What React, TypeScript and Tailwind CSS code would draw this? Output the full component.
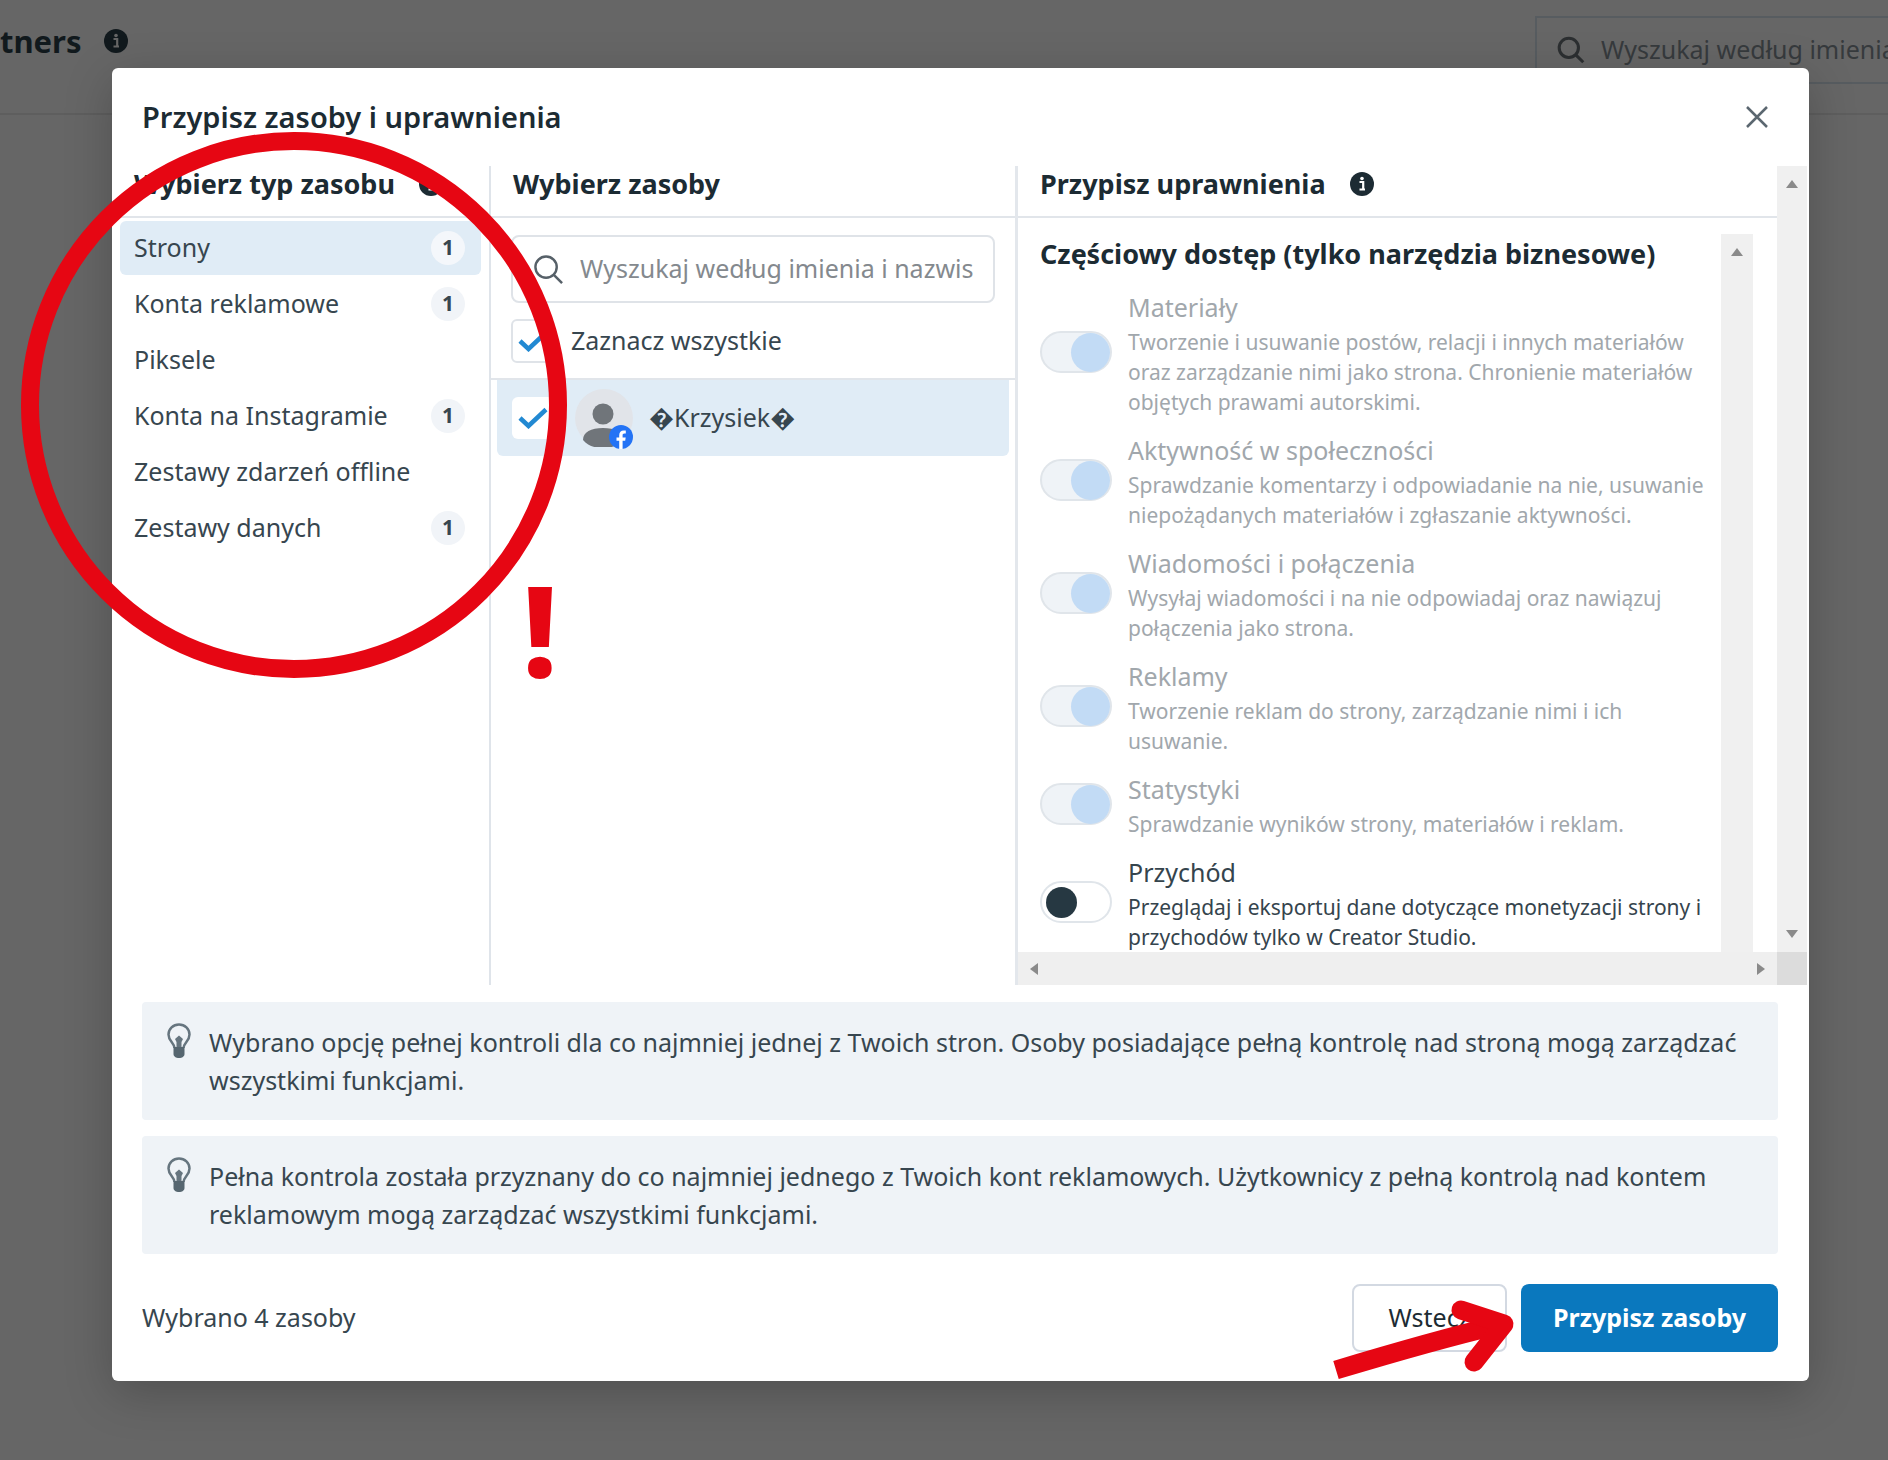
import { useState } from "react";

const RESOURCE_TYPES = [
  { name: "Strony", count: 1 },
  { name: "Konta reklamowe", count: 1 },
  { name: "Piksele" },
  { name: "Konta na Instagramie", count: 1 },
  { name: "Zestawy zdarzeń offline" },
  { name: "Zestawy danych", count: 1 },
];

const PERMISSIONS = [
  {
    id: "content",
    name: "Materiały",
    text: "Tworzenie i usuwanie postów, relacji i innych materiałów oraz zarządzanie nimi jako strona. Chronienie materiałów objętych prawami autorskimi.",
    locked: true,
  },
  {
    id: "community",
    name: "Aktywność w społeczności",
    text: "Sprawdzanie komentarzy i odpowiadanie na nie, usuwanie niepożądanych materiałów i zgłaszanie aktywności.",
    locked: true,
  },
  {
    id: "messages",
    name: "Wiadomości i połączenia",
    text: "Wysyłaj wiadomości i na nie odpowiadaj oraz nawiązuj połączenia jako strona.",
    locked: true,
  },
  {
    id: "ads",
    name: "Reklamy",
    text: "Tworzenie reklam do strony, zarządzanie nimi i ich usuwanie.",
    locked: true,
  },
  {
    id: "insights",
    name: "Statystyki",
    text: "Sprawdzanie wyników strony, materiałów i reklam.",
    locked: true,
  },
  {
    id: "revenue",
    name: "Przychód",
    text: "Przeglądaj i eksportuj dane dotyczące monetyzacji strony i przychodów tylko w Creator Studio.",
    locked: false,
  },
];

const NOTICES = [
  "Wybrano opcję pełnej kontroli dla co najmniej jednej z Twoich stron. Osoby posiadające pełną kontrolę nad stroną mogą zarządzać wszystkimi funkcjami.",
  "Pełna kontrola została przyznany do co najmniej jednego z Twoich kont reklamowych. Użytkownicy z pełną kontrolą nad kontem reklamowym mogą zarządzać wszystkimi funkcjami.",
];

function InfoIcon({ hole = "white" }: { hole?: string }) {
  return (
    <svg viewBox="0 0 24 24" className="size-6 shrink-0" aria-hidden="true">
      <circle cx="12" cy="12" r="12" fill="currentColor" />
      <circle cx="12" cy="6.5" r="1.8" fill={hole} />
      <path d="M9.5 10h3.7v7M9.5 17.5h5.5" stroke={hole} strokeWidth="2.2" fill="none" />
    </svg>
  );
}

function SearchIcon({ className }: { className: string }) {
  return (
    <svg viewBox="0 0 32 32" className={className} fill="none" stroke="currentColor" aria-hidden="true">
      <circle cx="13.5" cy="13.5" r="11" />
      <path d="M21.5 21.5 30 30" />
    </svg>
  );
}

function BulbIcon() {
  return (
    <svg viewBox="0 0 24 36" className="h-9 w-6 shrink-0" aria-hidden="true">
      <path
        d="M7.500 25C7 19.500 1.500 18 1.500 11.500a10.500 10 0 0 1 21 0C22.500 18 17 19.500 16.500 25"
        fill="none"
        stroke="#66757f"
        strokeWidth="2.500"
      />
      <path d="M12 12.500l4 3.500-1.500 3v5h-5v-5L8 16z" fill="#66757f" />
      <path d="M6.500 24h11v7c0 2.500-2.500 4-5.500 4s-5.500-1.500-5.500-4z" fill="#566670" />
    </svg>
  );
}

function CheckBox({ id, bordered }: { id: string; bordered?: boolean }) {
  return (
    <span className="grid size-11 shrink-0 place-items-center">
      <input
        id={id}
        type="checkbox"
        defaultChecked
        className={
          "peer col-start-1 row-start-1 appearance-none rounded-md bg-white " +
          (bordered ? "size-11 border-2 border-[#dfe3e8]" : "size-[42px]")
        }
      />
      <svg
        viewBox="0 0 30 22"
        className="pointer-events-none invisible col-start-1 row-start-1 h-[22px] w-[30px] peer-checked:visible"
        aria-hidden="true"
      >
        <path d="M2 11l8.500 8L28 2.500" fill="none" stroke="#2289d2" strokeWidth="4.500" />
      </svg>
    </span>
  );
}

function Arrow({ className }: { className: string }) {
  return (
    <svg viewBox="0 0 12 8" className={"h-2 w-3 fill-[#8a8a8a] " + className} aria-hidden="true">
      <path d="M6 0l6 8H0z" />
    </svg>
  );
}

function ColumnHeader({ title, info }: { title: string; info?: boolean }) {
  return (
    <h2 className="flex items-center gap-6 border-b-2 border-[#e1e5ea] pb-3.5 pl-[22px] text-[27px] leading-9 font-bold text-[#1c2b33]">
      {title}
      {info && <InfoIcon />}
    </h2>
  );
}

function ResourceTypes() {
  const [selected, setSelected] = useState("Strony");
  return (
    <section className="border-r-2 border-[#dfe4ea]">
      <ColumnHeader title="Wybierz typ zasobu" info />
      <ul className="flex flex-col gap-0.5 px-2 pt-[3px]">
        {RESOURCE_TYPES.map((type) => (
          <li key={type.name}>
            <button
              type="button"
              onClick={() => setSelected(type.name)}
              className={
                "flex h-[54px] w-full items-center justify-between rounded-md pr-4 pl-3.5 text-left " +
                (selected === type.name ? "bg-[#e0ecf6]" : "bg-white")
              }
            >
              {type.name}
              {type.count && (
                <span
                  className={
                    "grid size-[34px] place-items-center rounded-full text-[21px] font-bold " +
                    (selected === type.name ? "bg-[#f4f7fb]" : "bg-[#f1f4f8]")
                  }
                >
                  {type.count}
                </span>
              )}
            </button>
          </li>
        ))}
      </ul>
    </section>
  );
}

function Resources() {
  return (
    <section className="border-r-[3px] border-[#e3e7ec]">
      <ColumnHeader title="Wybierz zasoby" />
      <div className="mt-[17px] px-5">
        <label className="flex h-[68px] items-center gap-4 rounded-lg border-2 border-[#dfe3e8] px-5">
          <SearchIcon className="size-[31px] shrink-0 stroke-[2.5] text-[#566068]" />
          <input
            type="text"
            aria-label="Wyszukaj zasoby"
            placeholder="Wyszukaj według imienia i nazwis"
            className="w-full min-w-0 outline-none placeholder:text-[#84898e]"
          />
        </label>
      </div>
      <div className="flex h-[77px] items-center gap-4 border-b-2 border-[#e1e5ea] pl-5">
        <CheckBox id="all" bordered />
        <label htmlFor="all">Zaznacz wszystkie</label>
      </div>
      <div className="mx-1.5 flex h-[76px] items-center rounded-b-md bg-[#e0ecf6] pl-3.5">
        <CheckBox id="resource" />
        <span className="relative ml-5 size-[58px] shrink-0">
          <svg viewBox="0 0 58 58" className="size-full" aria-hidden="true">
            <circle cx="29" cy="29" r="29" fill="#e1e4e9" />
            <circle cx="28" cy="25" r="10.500" fill="#70757a" />
            <path d="M8 51c0-8 8-12 20-12s20 4 20 12c-5 6-12 8-20 8s-15-2-20-8z" fill="#70757a" />
          </svg>
          <svg viewBox="0 0 24 24" className="absolute right-0 -bottom-0.5 size-6" aria-hidden="true">
            <circle cx="12" cy="12" r="12" fill="#2373f5" />
            <path
              d="M10.200 24v-8.300H7.500v-3.300h2.700v-2.200c0-3.100 1.700-4.700 4.500-4.700 1.100 0 2.100.1 2.100.1v3h-1.400c-1.400 0-1.800.8-1.800 1.700v2.100h3.100l-.5 3.300h-2.600V24z"
              fill="white"
            />
          </svg>
        </span>
        <label htmlFor="resource" className="ml-4">
          {"\uFFFDKrzysiek\uFFFD"}
        </label>
      </div>
    </section>
  );
}

function Permissions() {
  return (
    <section className="grid min-w-0 grid-cols-[minmax(0,1fr)_30px] grid-rows-[1fr_33px] pr-0.5">
      <div>
        <ColumnHeader title="Przypisz uprawnienia" info />
        <div className="mt-4 flex pr-6 pl-[22px]">
          <div className="grow">
            <h3 className="text-[27px] leading-10 font-bold text-[#1c2b33]">
              Częściowy dostęp (tylko narzędzia biznesowe)
            </h3>
            <ul className="mt-[13px] flex flex-col gap-[13px]">
              {PERMISSIONS.map((p) => (
                <li
                  key={p.id}
                  className={"flex items-center gap-4 " + (p.locked ? "text-[#a1a7ac]" : "text-[#35444d]")}
                >
                  <input
                    id={p.id}
                    type="checkbox"
                    role="switch"
                    defaultChecked={p.locked}
                    disabled={p.locked}
                    className="flex h-[42px] w-[72px] shrink-0 appearance-none items-center rounded-full border-2 border-[#e0e5ea] bg-white px-1 before:size-[31px] before:rounded-full before:bg-[#263842] checked:justify-end checked:bg-[#eff3f7] checked:px-0 checked:before:size-[39px] checked:before:bg-[#c2dbf5]"
                  />
                  <div>
                    <label htmlFor={p.id} className="block leading-10">
                      {p.name}
                    </label>
                    <p className="text-[21px] leading-[30px]">{p.text}</p>
                  </div>
                </li>
              ))}
            </ul>
          </div>
          <div className="w-8 shrink-0 bg-[#f0f0f0] pt-3.5">
            <Arrow className="mx-auto" />
          </div>
        </div>
      </div>
      <div className="flex flex-col items-center justify-between bg-[#f0f0f0] py-3.5">
        <Arrow className="" />
        <Arrow className="rotate-180" />
      </div>
      <div className="flex items-center justify-between bg-[#efefef] px-2.5">
        <Arrow className="-rotate-90" />
        <Arrow className="rotate-90" />
      </div>
      <div className="bg-[#dcdcdc]" />
    </section>
  );
}

function Dialog() {
  return (
    <div
      role="dialog"
      aria-labelledby="dialog-title"
      className="absolute top-[68px] right-[79px] left-28 rounded-md bg-white text-[#37464f] shadow-[0_12px_48px_rgba(0,0,0,0.22)]"
    >
      <header className="flex h-[98px] items-center justify-between pr-10 pl-[30px]">
        <h1 id="dialog-title" className="text-[29px] font-semibold text-[#1c2b33]">
          Przypisz zasoby i uprawnienia
        </h1>
        <button type="button" aria-label="Zamknij" className="text-[#5b6770]">
          <svg viewBox="0 0 24 24" className="size-6" fill="none" stroke="currentColor" aria-hidden="true">
            <path d="M2 2l20 20M22 2 2 22" strokeWidth="2.500" />
          </svg>
        </button>
      </header>
      <div className="grid grid-cols-[379px_527px_minmax(0,1fr)]">
        <ResourceTypes />
        <Resources />
        <Permissions />
      </div>
      <div className="mt-[17px] flex flex-col gap-4 pr-[31px] pl-[30px]">
        {NOTICES.map((notice) => (
          <div key={notice} className="flex gap-[18px] rounded bg-[#eff3f7] px-[25px] py-[21px]">
            <BulbIcon />
            <p className="leading-[38px]">{notice}</p>
          </div>
        ))}
      </div>
      <footer className="flex items-center gap-3.5 pt-[30px] pr-[31px] pb-[29px] pl-[30px]">
        <p className="grow">Wybrano 4 zasoby</p>
        <button type="button" className="h-[68px] w-[155px] rounded-lg border-2 border-[#d3d9e2] text-[#1c2b33]">
          Wstecz
        </button>
        <button type="button" className="h-[68px] rounded-lg bg-[#0a78be] px-8 font-bold text-white">
          Przypisz zasoby
        </button>
      </footer>
    </div>
  );
}

function Annotations() {
  return (
    <div className="pointer-events-none absolute inset-0 overflow-hidden text-[#e60613]">
      <svg viewBox="0 0 548 546" className="absolute top-[132px] left-[20px] h-[546px] w-[548px]" aria-hidden="true">
        <circle cx="274" cy="273" r="264" fill="none" stroke="currentColor" strokeWidth="18" />
      </svg>
      <span className="absolute top-[565px] left-[522px] text-[126px] leading-none font-extrabold">!</span>
      <svg
        viewBox="0 0 190 90"
        className="absolute top-[1290px] left-[1330px] h-[90px] w-[190px]"
        fill="none"
        stroke="currentColor"
        strokeWidth="19"
        aria-hidden="true"
      >
        <path d="M6 80C56 65 114 48 165 36" />
        <path d="M131 20 174 34 144 72" strokeLinecap="round" strokeLinejoin="round" />
      </svg>
    </div>
  );
}

export default function App() {
  return (
    <div className="relative min-h-screen overflow-hidden bg-[#666666] font-['Noto_Sans',sans-serif] text-[25px] text-[#1c2b33]">
      <div className="flex h-[115px] items-start justify-between border-b-2 border-[#5e5e5e]">
        <div className="flex items-center gap-[22px] pt-5 text-[#11191d]">
          <span className="text-[31px] leading-[42px] font-bold">tners</span>
          <InfoIcon hole="#666666" />
        </div>
        <label className="mt-4 flex h-[68px] w-[353px] items-center gap-4 border-2 border-r-0 border-[#575c60] pl-5 text-[#2c2f31]">
          <SearchIcon className="size-7 shrink-0 stroke-[3.5]" />
          <input
            type="text"
            aria-label="Szukaj"
            placeholder="Wyszukaj według imienia i nazwiska"
            className="w-full min-w-0 outline-none placeholder:text-[#363a3d]"
          />
        </label>
      </div>
      <Dialog />
      <Annotations />
    </div>
  );
}
